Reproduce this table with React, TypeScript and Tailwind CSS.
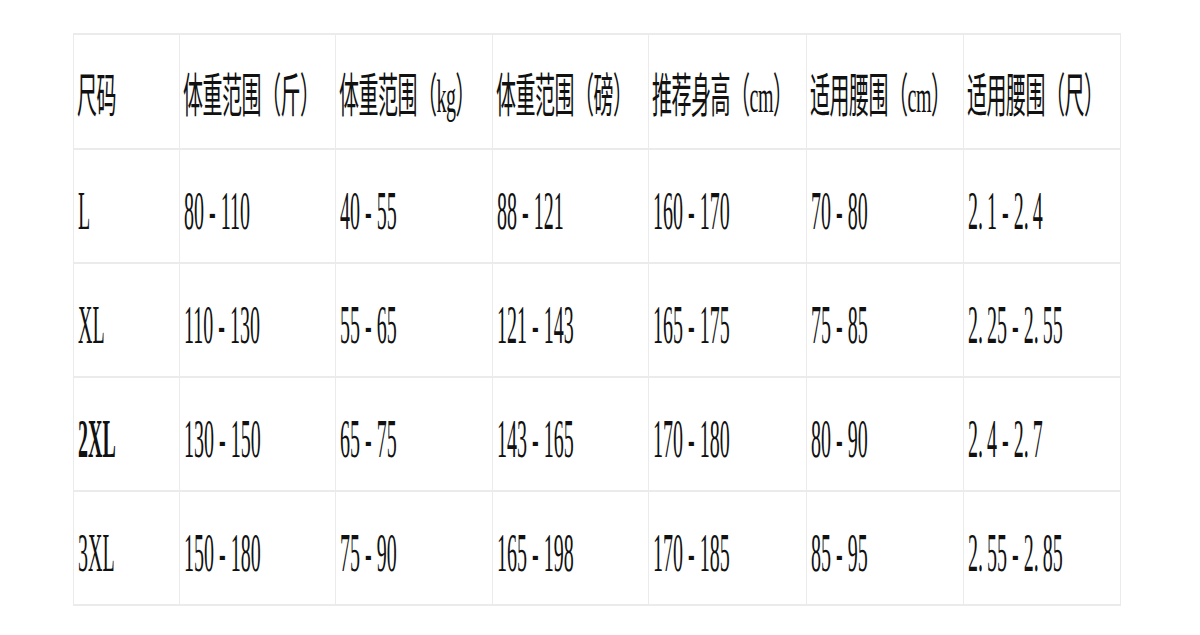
const headers = ['尺码', '体重范围（斤）', '体重范围（kg）', '体重范围（磅）', '推荐身高（cm）', '适用腰围（cm）', '适用腰围（尺）'];

const rows = [
  ['L', '80 - 110', '40 - 55', '88 - 121', '160 - 170', '70 - 80', '2.1 - 2.4'],
  ['XL', '110 - 130', '55 - 65', '121 - 143', '165 - 175', '75 - 85', '2.25 - 2.55'],
  ['2XL', '130 - 150', '65 - 75', '143 - 165', '170 - 180', '80 - 90', '2.4 - 2.7'],
  ['3XL', '150 - 180', '75 - 90', '165 - 198', '170 - 185', '85 - 95', '2.55 - 2.85'],
];

const widths = ['w-[106px]', 'w-[156px]', 'w-[157px]', 'w-[156px]', 'w-[158px]', 'w-[157px]', 'w-[157px]'];

// the source font sets "." in a full half-width cell, so widen it
const Value = ({ text }: { text: string }) => (
  <>
    {text.split(/(\.)/).map((part, i) =>
      part === '.' ? (
        <span key={i} className="tracking-[4px]">
          .
        </span>
      ) : (
        part
      ),
    )}
  </>
);

export default function App() {
  return (
    <div className="min-h-[635px] w-[1200px] bg-white pl-[73px] pt-[33px] text-[#111] [font-family:'Liberation_Serif','Noto_Sans_CJK_SC',serif]">
      <table className="table-fixed border-collapse">
        <thead>
          <tr className="h-[115px]">
            {headers.map((h, i) => (
              <th
                key={h}
                className={`${widths[i]} border-x border-y-2 border-[#ebebeb] pl-[3px] pt-3 text-left align-middle font-normal`}
              >
                <span className="inline-block origin-center scale-y-[2.35] whitespace-nowrap text-[20px] leading-none tracking-[-0.5px]">
                  {h}
                </span>
              </th>
            ))}
          </tr>
        </thead>
        <tbody>
          {rows.map((r) => (
            <tr key={r[0]} className="h-[114px]">
              {r.map((c, i) => (
                <td
                  key={i}
                  className={`border-x border-y-2 border-[#ebebeb] pl-[4px] pt-3 align-middle ${i === 0 && r[0] === '2XL' ? 'font-bold' : ''}`}
                >
                  <span className="inline-block origin-center scale-y-[2.7] whitespace-nowrap text-[20px] leading-none">
                    <Value text={c} />
                  </span>
                </td>
              ))}
            </tr>
          ))}
        </tbody>
      </table>
    </div>
  );
}
